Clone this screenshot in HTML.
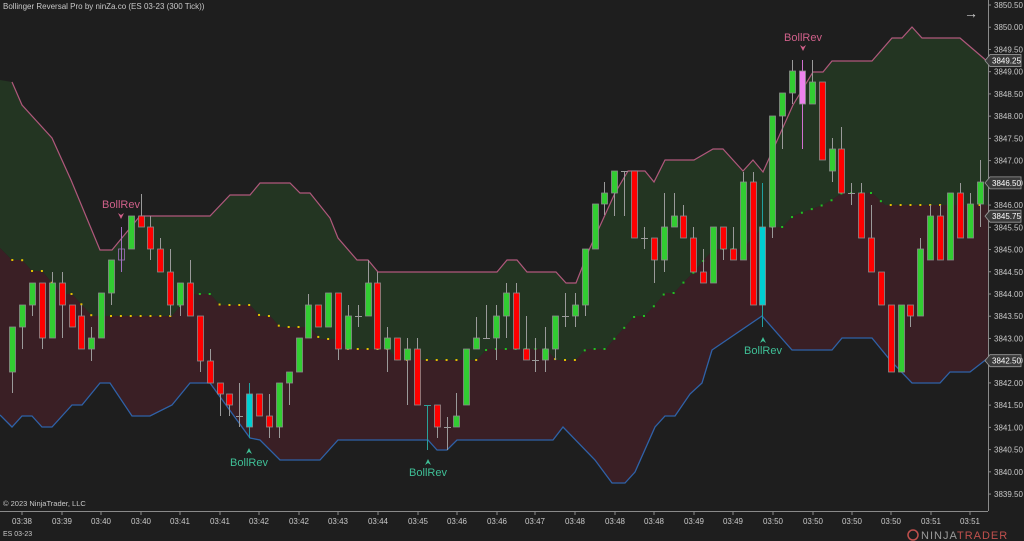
<!DOCTYPE html>
<html><head><meta charset="utf-8"><style>
html,body{margin:0;padding:0;background:#1e1e1e;overflow:hidden}
svg{display:block;font-family:"Liberation Sans",sans-serif}
</style></head><body>
<svg id="s" width="1024" height="541" viewBox="0 0 1024 541" xmlns="http://www.w3.org/2000/svg">
<rect width="1024" height="541" fill="#1e1e1e"/>
<g id="fills"></g>
<g id="cand"></g>
<g id="ann"></g>
<text x="3" y="9" fill="#c8c8c8" font-size="8">Bollinger Reversal Pro by ninZa.co (ES 03-23 (300 Tick))</text>
<text x="964" y="18" fill="#d0d0d0" font-size="14">→</text>
<text x="3" y="506" fill="#c8c8c8" font-size="7.5">© 2023 NinjaTrader, LLC</text>
<text x="3" y="536" fill="#c8c8c8" font-size="7">ES 03-23</text>
<line x1="0" y1="511.5" x2="988" y2="511.5" stroke="#8a8a8a" stroke-width="1"/>
<line x1="988.5" y1="0" x2="988.5" y2="511" stroke="#8a8a8a" stroke-width="1"/>
<g id="axis" font-size="8" fill="#c8c8c8"></g>
<g font-size="11" letter-spacing="1">
<circle cx="913" cy="535" r="5" fill="none" stroke="#c0504d" stroke-width="1.5"/>
<text x="921" y="539" fill="#9a9a9a">NINJA<tspan fill="#c0504d">TRADER</tspan></text>
</g>
</svg>
<script>
const NS="http://www.w3.org/2000/svg";
function el(p,t,a,txt){const e=document.createElementNS(NS,t);for(const k in a)e.setAttribute(k,a[k]);if(txt!==undefined)e.textContent=txt;document.getElementById(p).appendChild(e);return e;}
const up=[[0,80],[12,82],[22,105],[52,138],[71,180],[100,250],[112,250],[140,216],[210,216],[230,195],[250,195],[260,183],[290,183],[300,193],[310,193],[330,218],[338,238],[357,260],[368,260],[378,272],[497,272],[507,260],[517,260],[527,272],[556,272],[566,283],[576,283],[589,250],[615,193],[628,171],[645,171],[654,182],[665,160],[694,160],[713,149],[723,149],[743,171],[753,160],[763,172],[793,105],[813,72],[823,72],[832,61],[872,61],[892,38],[902,38],[912,27],[922,38],[960,38],[988,62]];
const mid=[[0,248],[12,260],[22,260],[32,271],[42,271],[52,283],[62,294],[72,294],[82,305],[92,316],[172,316],[185,300],[195,294],[210,294],[220,305],[250,305],[260,316],[270,316],[280,327],[310,327],[320,339],[338,339],[348,349],[388,349],[398,360],[477,360],[487,349],[546,349],[556,360],[576,360],[586,349],[606,349],[615,338],[625,327],[635,316],[645,316],[655,305],[665,293],[674,293],[684,282],[694,272],[704,260],[714,249],[743,249],[753,238],[763,227],[783,227],[793,216],[823,205],[832,200],[842,193],[872,193],[885,205],[988,205]];
const lo=[[0,415],[12,427],[22,416],[32,416],[42,427],[52,427],[72,405],[82,405],[100,383],[110,383],[132,416],[150,416],[172,405],[190,383],[210,383],[250,438],[260,440],[280,460],[320,460],[338,440],[428,440],[437,450],[447,450],[457,440],[553,440],[563,427],[595,460],[612,483],[625,483],[635,472],[655,427],[665,416],[675,416],[690,394],[702,383],[712,350],[762,316],[792,350],[832,350],[842,338],[872,338],[890,360],[912,383],[940,383],[950,372],[970,372],[988,358]];
const pts=a=>a.map(p=>p.join(',')).join(' ');
el('fills','polygon',{points:pts(up)+' '+pts(mid.slice().reverse()),fill:'#233522'});
el('fills','polygon',{points:pts(mid)+' '+pts(lo.slice().reverse()),fill:'#3a1f25'});
el('fills','polyline',{points:pts(up.slice(1)),fill:'none',stroke:'#b0587c','stroke-width':1.2});
el('fills','polyline',{points:pts(lo),fill:'none',stroke:'#2f62a8','stroke-width':1.3});
function interp(a,x){for(let i=0;i<a.length-1;i++){if(x>=a[i][0]&&x<=a[i+1][0]){const t=(x-a[i][0])/(a[i+1][0]-a[i][0]);return a[i][1]+t*(a[i+1][1]-a[i][1]);}}return a[a.length-1][1];}
const C=`g 327 372 327 393
g 305 327 305 349
g 283 305 283 316
r 283 338 283 349
g 283 338 272 338
r 283 305 272 338
r 305 327
r 316 349 305 349
g 338 349 327 361
g 293 338
g 260 293 260 305
h 249 260 227 272
g 216 249
r 216 227 194 227
r 227 249 216 260
r 249 272 238 272
r 272 305 249 316
g 283 305 283 316
r 283 316 260 316
r 316 361 316 372
r 361 383 349 383
r 383 394 383 416
r 394 405 394 416
d 416 416 383 427
c 394 427 383 438
r 394 416
r 416 427 394 438
g 383 427 383 438
g 372 383 372 405
g 338 372
g 305 338 294 338
r 305 327
g 293 327
r 293 349 293 360
g 316 349 305 349
d 316 316 305 327
g 283 316 260 316
r 283 349 272 349
g 338 349 327 372
r 338 360
g 349 360 338 405
r 349 405 338 405
t 405 405 405 450
r 405 427 405 438
d 427 427 417 450
g 416 427 393 427
g 349 405
g 338 349 317 349
d 338 338 305 338
g 316 338 305 360
g 293 316 283 338
r 293 349 283 349
r 349 360 316 360
d 360 360 338 372
g 349 360 327 372
g 316 349 316 360
d 316 316 293 327
g 305 316 293 327
g 249 305 249 316
g 204 249
g 193 204 182 215
g 171 193 171 216
d 171 171 171 216
r 171 238
d 238 238 227 249
r 238 260 238 283
g 227 260 193 272
g 216 227 193 227
r 216 238 205 238
r 238 272 227 272
r 272 283 249 283
g 227 283
r 227 249 227 260
r 249 260 227 260
g 182 260 172 260
r 182 305 172 305
c 227 305 183 327
g 116 227 116 238
g 93 116 93 149
g 71 93 60 104
p 71 104 60 149
g 82 104 60 104
r 82 160
g 149 171 138 182
r 149 193 127 193
d 193 193 183 205
r 193 238 183 238
r 238 272 205 272
r 272 305
r 305 372
g 305 372
r 305 316 305 327
g 249 316 238 316
g 216 260 205 260
r 216 260 205 260
g 193 260
r 193 238 183 238
g 204 238 193 238
g 182 204 160 227`.split('\n');
const col={g:'#32cd32',r:'#ff0000',c:'#00ced1',p:'#ee82ee',h:'none',d:'#aaa',t:'#2aa198'};
// dots
C.forEach((l,i)=>{const x=12.3+i*9.87;const y=interp(mid,x);
 const green=(x>180&&x<213)||(x>484&&x<550)||(x>582&&x<885);
 el('cand','rect',{x:x-1,y:y-1,width:2,height:2,fill:green?'#22c022':'#e0c000'});});
C.forEach((l,i)=>{const a=l.trim().split(/\s+/);const t=a[0];const bt=+a[1],bb=+a[2];const wt=a[3]?+a[3]:bt,wb=a[4]?+a[4]:bb;
 const x=Math.round(12.3+i*9.87)+0.5;
 const wc=t==='h'?'#a070c0':t==='t'?'#2aa198':t==='p'?'#d070d0':t==='c'?'#20a0a0':'#9a9a9a';
 if(wb>wt)el('cand','line',{x1:x,y1:wt,x2:x,y2:wb,stroke:wc,'stroke-width':1});
 if(t==='d'||t==='t'){el('cand','line',{x1:x-3.5,y1:bt+0.5,x2:x+3.5,y2:bt+0.5,stroke:wc,'stroke-width':1});}
 else el('cand','rect',{x:x-3,y:bt,width:6,height:Math.max(1,bb-bt),fill:col[t],stroke:t==='h'?'#a070c0':'#8c8c8c','stroke-width':0.8});
});
// annotations
function lab(x,y,c,down){el('ann','text',{x:x,y:y,fill:c,'font-size':11,'text-anchor':'middle'},'BollRev');}
function arr(x,y,c,down){const d=down?`M${x-3},${y-3} L${x},${y+3} L${x+3},${y-3} L${x},${y-1}Z`:`M${x-3},${y+3} L${x},${y-3} L${x+3},${y+3} L${x},${y+1}Z`;el('ann','path',{d:d,fill:c});}
lab(121,208,'#d0608a');arr(121,216,'#d0608a',1);
lab(803,41,'#d0608a');arr(803,48,'#d0608a',1);
lab(249,466,'#3fbf96');arr(249,451,'#3fbf96',0);
lab(428,476,'#3fbf96');arr(428,462,'#3fbf96',0);
lab(763,354,'#3fbf96');arr(763,340,'#3fbf96',0);
// price axis
for(let k=0;k<=22;k++){const p=3850.5-k*0.5;const y=5+k*22.23;
 el('axis','line',{x1:988,y1:y,x2:991,y2:y,stroke:'#8a8a8a'});
 el('axis','text',{x:994,y:y+3},p.toFixed(2));}
[[3849.25],[3846.50],[3845.75],[3842.50]].forEach(([p])=>{const y=5+(3850.5-p)*44.46;
 el('axis','path',{d:`M985,${y} L990,${y-6} L1021,${y-6} L1021,${y+6} L990,${y+6}Z`,fill:'#3a3a3a',stroke:'#9a9a9a','stroke-width':0.8});
 el('axis','text',{x:992,y:y+3,fill:'#ffffff'},p.toFixed(2));});
// time axis
const tx=[22,62,101,141,180,220,259,299,338,378,418,457,497,535,575,615,654,694,733,773,813,852,891,931,970];
const tl=['03:38','03:39','03:40','03:40','03:41','03:41','03:42','03:42','03:43','03:44','03:45','03:46','03:46','03:47','03:48','03:48','03:48','03:49','03:49','03:50','03:50','03:50','03:50','03:51','03:51'];
tx.forEach((x,i)=>{el('axis','line',{x1:x,y1:511,x2:x,y2:515,stroke:'#8a8a8a'});el('axis','text',{x:x,y:524,'text-anchor':'middle'},tl[i]);});
</script>
</body></html>
